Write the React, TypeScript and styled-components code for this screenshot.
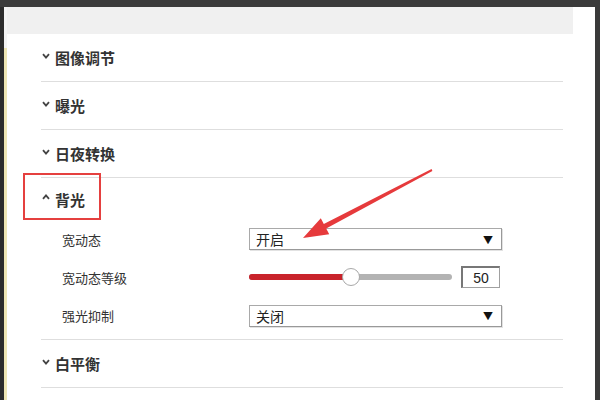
import React from 'react';
import styled, { createGlobalStyle } from 'styled-components';

const GlobalStyle = createGlobalStyle`
  html, body {
    margin: 0;
    padding: 0;
    background: #3a3a3a;
  }
  body {
    font-family: "Noto Sans CJK SC", "Noto Sans", "Liberation Sans", sans-serif;
    color: #333;
  }
`;

const Page = styled.div`
  position: relative;
  width: 600px;
  height: 400px;
  overflow: hidden;
  display: flex;
  flex-direction: column;
  background: #3a3a3a;
`;

const TopBar = styled.div`
  height: 7px;
  flex: none;
  background: #3b3b3b;
`;

const Body = styled.div`
  flex: 1;
  display: flex;
  min-height: 0;
`;

const LeftEdge = styled.div`
  width: 7px;
  flex: none;
  display: flex;
  flex-direction: column;
`;

const EdgePart = styled.div<{ $tint: string; $grow?: boolean }>`
  height: ${({ $grow }) => ($grow ? 'auto' : '41px')};
  flex: ${({ $grow }) => ($grow ? 1 : 'none')};
  background: linear-gradient(to right, #2c2c2c 4px, ${({ $tint }) => $tint} 4px);
`;

const RightEdge = styled.div`
  width: 5px;
  flex: none;
  background: #3a3a3a;
`;

const Panel = styled.div`
  flex: 1;
  background: #fff;
  display: flex;
  flex-direction: column;
`;

const GrayBand = styled.div`
  height: 27px;
  width: 566px;
  flex: none;
  background: #f0f0f0;
`;

const SectionList = styled.div`
  padding-left: 34px;
  width: 522px;
  display: flex;
  flex-direction: column;
`;

const Section = styled.div<{ $open?: boolean }>`
  border-bottom: 1px solid #dedede;
  padding-bottom: ${({ $open }) => ($open ? '4px' : '0')};
`;

const Header = styled.div<{ $open?: boolean }>`
  position: relative;
  height: ${({ $open }) => ($open ? '42px' : '47px')};
  display: flex;
  align-items: center;
  gap: 5px;
  padding-left: 1px;
  font-size: 15px;
  font-weight: 700;
  color: #333;
`;

const Chevron = styled.svg`
  width: 8px;
  height: 6px;
  margin-top: -4px;
  flex: none;
`;

const Highlight = styled.div`
  position: absolute;
  left: -18px;
  top: -5px;
  width: 74px;
  height: 43px;
  border: 2px solid #e5403f;
  pointer-events: none;
`;

const Row = styled.div<{ $tall?: boolean }>`
  height: ${({ $tall }) => ($tall ? '39px' : '38px')};
  display: flex;
  align-items: center;
  padding-left: 21px;
`;

const Label = styled.div`
  width: 187px;
  flex: none;
  font-size: 13px;
  color: #333;
`;

const SelectBox = styled.div`
  width: 253px;
  height: 22px;
  box-sizing: border-box;
  border: 1px solid #a9a9a9;
  border-right-color: #999;
  border-bottom-color: #999;
  box-shadow: 1px 1px 0 #e2e2e2;
  display: flex;
  align-items: center;
  justify-content: space-between;
  padding: 0 8px 0 6px;
  font-size: 14px;
  color: #222;
  background: #fff;
`;

const Caret = styled.span`
  font-size: 10px;
  color: #111;
`;

const SliderWrap = styled.div`
  display: flex;
  align-items: center;
  gap: 9px;
`;

const Track = styled.div`
  position: relative;
  width: 203px;
  height: 6px;
  border-radius: 3px;
  background: #b3b3b3;
`;

const Fill = styled.div`
  height: 100%;
  border-radius: 3px;
  background: #c9232b;
`;

const Knob = styled.div`
  position: absolute;
  top: 50%;
  width: 18px;
  height: 18px;
  margin-left: -9px;
  margin-top: -9px;
  box-sizing: border-box;
  border-radius: 50%;
  border: 1px solid #a8a8a8;
  background: #fff;
`;

const NumberBox = styled.div`
  width: 39px;
  height: 22px;
  box-sizing: border-box;
  border: 1px solid #a0a0a0;
  border-top: 2px solid #777;
  border-left: 2px solid #777;
  display: flex;
  align-items: center;
  justify-content: center;
  font-family: "Liberation Sans", Arial, sans-serif;
  font-size: 14px;
  color: #222;
`;

const Overlay = styled.svg`
  position: absolute;
  left: 0;
  top: 0;
  width: 600px;
  height: 400px;
  pointer-events: none;
`;

const Down = () => (
  <Chevron viewBox="0 0 8 6">
    <path d="M1 1.2 L4 4.6 L7 1.2" fill="none" stroke="#444" strokeWidth="1.8" />
  </Chevron>
);

const Up = () => (
  <Chevron viewBox="0 0 8 6">
    <path d="M1 4.8 L4 1.4 L7 4.8" fill="none" stroke="#444" strokeWidth="1.8" />
  </Chevron>
);

const Select = ({ value }: { value: string }) => (
  <SelectBox>
    <span>{value}</span>
    <Caret>▼</Caret>
  </SelectBox>
);

const Slider = ({ value }: { value: number }) => {
  const pct = (value / 100) * 100;
  return (
    <SliderWrap>
      <Track>
        <Fill style={{ width: `${pct}%` }} />
        <Knob style={{ left: `${pct}%` }} />
      </Track>
      <NumberBox>{value}</NumberBox>
    </SliderWrap>
  );
};

const collapsedTop = ['图像调节', '曝光', '日夜转换'];
const collapsedBottom = ['白平衡'];

export default function App() {
  return (
    <>
      <GlobalStyle />
      <Page>
        <TopBar />
        <Body>
          <LeftEdge>
            <EdgePart $tint="#f4f4f4" />
            <EdgePart $tint="#eee6b4" $grow />
          </LeftEdge>
          <Panel>
            <GrayBand />
            <SectionList>
              {collapsedTop.map((t) => (
                <Section key={t}>
                  <Header>
                    <Down />
                    {t}
                  </Header>
                </Section>
              ))}
              <Section $open>
                <Header $open>
                  <Highlight />
                  <Up />
                  背光
                </Header>
                <Row>
                  <Label>宽动态</Label>
                  <Select value="开启" />
                </Row>
                <Row>
                  <Label>宽动态等级</Label>
                  <Slider value={50} />
                </Row>
                <Row $tall>
                  <Label>强光抑制</Label>
                  <Select value="关闭" />
                </Row>
              </Section>
              {collapsedBottom.map((t) => (
                <Section key={t}>
                  <Header>
                    <Down />
                    {t}
                  </Header>
                </Section>
              ))}
            </SectionList>
          </Panel>
          <RightEdge />
        </Body>
        <Overlay viewBox="0 0 600 400">
          <polygon
            points="303,238 329.2,234.3 326.2,228.5 432.4,170.9 431.6,169.1 323.8,224.1 320.8,218.3"
            fill="#e63a3c"
          />
        </Overlay>
      </Page>
    </>
  );
}
